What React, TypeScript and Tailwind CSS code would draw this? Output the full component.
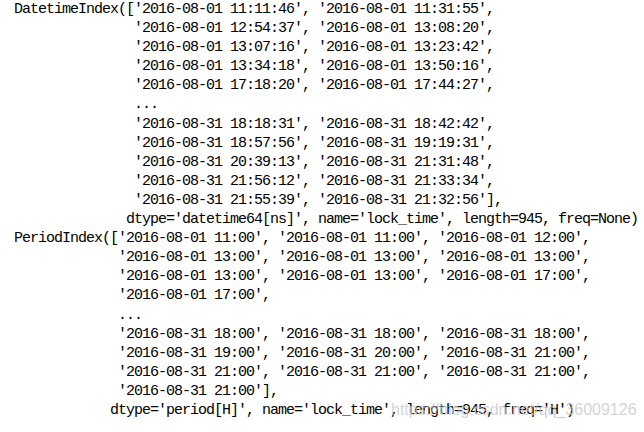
const lines = [
  "DatetimeIndex(['2016-08-01 11:11:46', '2016-08-01 11:31:55',",
  "               '2016-08-01 12:54:37', '2016-08-01 13:08:20',",
  "               '2016-08-01 13:07:16', '2016-08-01 13:23:42',",
  "               '2016-08-01 13:34:18', '2016-08-01 13:50:16',",
  "               '2016-08-01 17:18:20', '2016-08-01 17:44:27',",
  "               ...",
  "               '2016-08-31 18:18:31', '2016-08-31 18:42:42',",
  "               '2016-08-31 18:57:56', '2016-08-31 19:19:31',",
  "               '2016-08-31 20:39:13', '2016-08-31 21:31:48',",
  "               '2016-08-31 21:56:12', '2016-08-31 21:33:34',",
  "               '2016-08-31 21:55:39', '2016-08-31 21:32:56'],",
  "              dtype='datetime64[ns]', name='lock_time', length=945, freq=None)",
  "PeriodIndex(['2016-08-01 11:00', '2016-08-01 11:00', '2016-08-01 12:00',",
  "             '2016-08-01 13:00', '2016-08-01 13:00', '2016-08-01 13:00',",
  "             '2016-08-01 13:00', '2016-08-01 13:00', '2016-08-01 17:00',",
  "             '2016-08-01 17:00',",
  "             ...",
  "             '2016-08-31 18:00', '2016-08-31 18:00', '2016-08-31 18:00',",
  "             '2016-08-31 19:00', '2016-08-31 20:00', '2016-08-31 21:00',",
  "             '2016-08-31 21:00', '2016-08-31 21:00', '2016-08-31 21:00',",
  "             '2016-08-31 21:00'],",
  "            dtype='period[H]', name='lock_time', length=945, freq='H')",
];

export default function App() {
  return (
    <div className="relative w-[644px] h-[432px] overflow-hidden bg-white">
      {/* notebook output */}
      <pre
        className="pl-[14px] pt-0 text-[15px] leading-[19.1px] tracking-[-1px] text-black whitespace-pre"
        style={{ fontFamily: '"Liberation Mono", "DejaVu Sans Mono", monospace' }}
      >
        {lines.map((l, i) => (
          <div key={i} className="h-[19.1px]">
            {l}
          </div>
        ))}
      </pre>

      {/* blog watermark */}
      <span
        className="absolute left-[391px] top-[402px] text-[16px] leading-none text-[#c8c8c8]/80 whitespace-nowrap"
        style={{ fontFamily: '"Liberation Sans", Arial, sans-serif' }}
      >
        https://blog.csdn.net/qq_36009126
      </span>
    </div>
  );
}
